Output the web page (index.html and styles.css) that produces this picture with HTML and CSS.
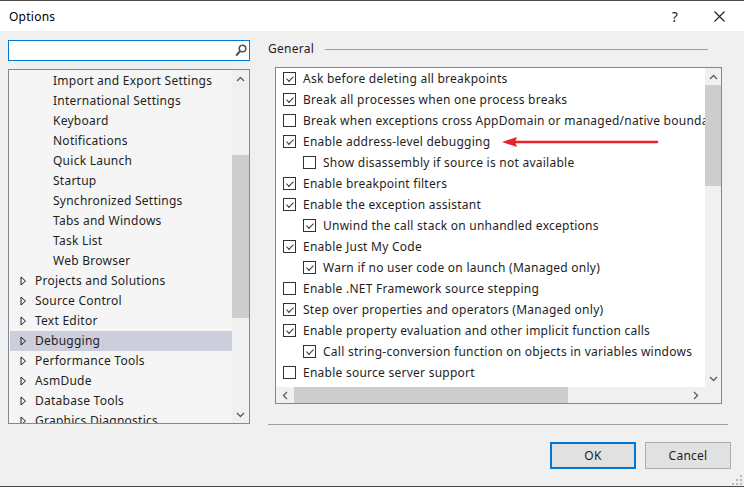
FILE: index.html
```html
<!DOCTYPE html>
<html lang="en">
<head>
    <meta charset="UTF-8">
    <title>Options</title>
    <link rel="stylesheet" href="styles.css">
</head>
<body>
    <div class="window">
        <div class="titlebar">
            <span class="title">Options</span>
            <span class="help">?</span>
            <svg class="close" width="11" height="11" viewBox="0 0 11 11">
                <path d="M0.5 0.5 L10.5 10.5 M10.5 0.5 L0.5 10.5" stroke="#1e1e1e" stroke-width="1.1" fill="none"/>
            </svg>
        </div>

        <div class="main">
            <div class="left-col">
                <div class="search">
                    <svg class="search-icon" width="12" height="13" viewBox="0 0 12 13">
                        <circle cx="7.5" cy="4.5" r="3.3" stroke="#555" stroke-width="1.6" fill="none"/>
                        <path d="M5.3 6.8 L1.2 11.6" stroke="#555" stroke-width="2.2"/>
                    </svg>
                </div>
                <div class="tree">
                    <div class="tree-items">
                        <div class="node sub">Import and Export Settings</div>
                        <div class="node sub">International Settings</div>
                        <div class="node sub">Keyboard</div>
                        <div class="node sub">Notifications</div>
                        <div class="node sub">Quick Launch</div>
                        <div class="node sub">Startup</div>
                        <div class="node sub">Synchronized Settings</div>
                        <div class="node sub">Tabs and Windows</div>
                        <div class="node sub">Task List</div>
                        <div class="node sub">Web Browser</div>
                        <div class="node top"><svg class="tri" width="7" height="10" viewBox="0 0 7 10"><path d="M1 1 L5.5 5 L1 9 Z" stroke="#1e1e1e" fill="none"/></svg>Projects and Solutions</div>
                        <div class="node top"><svg class="tri" width="7" height="10" viewBox="0 0 7 10"><path d="M1 1 L5.5 5 L1 9 Z" stroke="#1e1e1e" fill="none"/></svg>Source Control</div>
                        <div class="node top"><svg class="tri" width="7" height="10" viewBox="0 0 7 10"><path d="M1 1 L5.5 5 L1 9 Z" stroke="#1e1e1e" fill="none"/></svg>Text Editor</div>
                        <div class="node top selected"><svg class="tri" width="7" height="10" viewBox="0 0 7 10"><path d="M1 1 L5.5 5 L1 9 Z" stroke="#1e1e1e" fill="none"/></svg>Debugging</div>
                        <div class="node top"><svg class="tri" width="7" height="10" viewBox="0 0 7 10"><path d="M1 1 L5.5 5 L1 9 Z" stroke="#1e1e1e" fill="none"/></svg>Performance Tools</div>
                        <div class="node top"><svg class="tri" width="7" height="10" viewBox="0 0 7 10"><path d="M1 1 L5.5 5 L1 9 Z" stroke="#1e1e1e" fill="none"/></svg>AsmDude</div>
                        <div class="node top"><svg class="tri" width="7" height="10" viewBox="0 0 7 10"><path d="M1 1 L5.5 5 L1 9 Z" stroke="#1e1e1e" fill="none"/></svg>Database Tools</div>
                        <div class="node top"><svg class="tri" width="7" height="10" viewBox="0 0 7 10"><path d="M1 1 L5.5 5 L1 9 Z" stroke="#1e1e1e" fill="none"/></svg>Graphics Diagnostics</div>
                    </div>
                    <div class="vscroll tree-scroll">
                        <svg class="arrow" width="9" height="6" viewBox="0 0 9 6"><path d="M1 5 L4.5 1.5 L8 5" stroke="#606060" stroke-width="1.4" fill="none"/></svg>
                        <div class="track"><div class="thumb tree-thumb"></div></div>
                        <svg class="arrow" width="9" height="6" viewBox="0 0 9 6"><path d="M1 1 L4.5 4.5 L8 1" stroke="#606060" stroke-width="1.4" fill="none"/></svg>
                    </div>
                </div>
            </div>

            <div class="right-col">
                <div class="group-header">
                    <span>General</span>
                    <div class="group-line"></div>
                </div>
                <div class="panel">
                    <div class="panel-content">
                        <div class="opt"><span class="cb on"></span>Ask before deleting all breakpoints</div>
                        <div class="opt"><span class="cb on"></span>Break all processes when one process breaks</div>
                        <div class="opt"><span class="cb"></span>Break when exceptions cross AppDomain or managed/native boundaries</div>
                        <div class="opt"><span class="cb on"></span>Enable address-level debugging</div>
                        <div class="opt ind"><span class="cb"></span>Show disassembly if source is not available</div>
                        <div class="opt"><span class="cb on"></span>Enable breakpoint filters</div>
                        <div class="opt"><span class="cb on"></span>Enable the exception assistant</div>
                        <div class="opt ind"><span class="cb on"></span>Unwind the call stack on unhandled exceptions</div>
                        <div class="opt"><span class="cb on"></span>Enable Just My Code</div>
                        <div class="opt ind"><span class="cb on"></span>Warn if no user code on launch (Managed only)</div>
                        <div class="opt"><span class="cb"></span>Enable .NET Framework source stepping</div>
                        <div class="opt"><span class="cb on"></span>Step over properties and operators (Managed only)</div>
                        <div class="opt"><span class="cb on"></span>Enable property evaluation and other implicit function calls</div>
                        <div class="opt ind"><span class="cb on"></span>Call string-conversion function on objects in variables windows</div>
                        <div class="opt"><span class="cb"></span>Enable source server support</div>

                        <!-- annotation arrow -->
                        <svg class="red-arrow" width="160" height="12" viewBox="0 0 160 12">
                            <path d="M12 6 L155 6" stroke="#e8212b" stroke-width="2.6" stroke-linecap="round"/>
                            <path d="M0 6 L15 1 L13 6 L15 11 Z" fill="#e8212b"/>
                        </svg>
                    </div>
                    <div class="vscroll">
                        <svg class="arrow" width="9" height="6" viewBox="0 0 9 6"><path d="M1 5 L4.5 1.5 L8 5" stroke="#606060" stroke-width="1.4" fill="none"/></svg>
                        <div class="track"><div class="thumb panel-thumb"></div></div>
                        <svg class="arrow" width="9" height="6" viewBox="0 0 9 6"><path d="M1 1 L4.5 4.5 L8 1" stroke="#606060" stroke-width="1.4" fill="none"/></svg>
                    </div>
                    <div class="hscroll">
                        <svg class="arrow" width="6" height="9" viewBox="0 0 6 9"><path d="M5 1 L1.5 4.5 L5 8" stroke="#606060" stroke-width="1.4" fill="none"/></svg>
                        <div class="htrack"><div class="hthumb"></div></div>
                        <svg class="arrow" width="6" height="9" viewBox="0 0 6 9"><path d="M1 1 L4.5 4.5 L1 8" stroke="#606060" stroke-width="1.4" fill="none"/></svg>
                    </div>
                    <div class="corner"></div>
                </div>
                <div class="separator"></div>
            </div>
        </div>

        <div class="footer">
            <button class="btn default">OK</button>
            <button class="btn">Cancel</button>
        </div>

        <svg class="grip" width="10" height="10" viewBox="0 0 10 10">
            <rect x="8" y="0" width="2" height="2" fill="#b8b8b8"/>
            <rect x="4" y="4" width="2" height="2" fill="#b8b8b8"/>
            <rect x="8" y="4" width="2" height="2" fill="#b8b8b8"/>
            <rect x="0" y="8" width="2" height="2" fill="#b8b8b8"/>
            <rect x="4" y="8" width="2" height="2" fill="#b8b8b8"/>
            <rect x="8" y="8" width="2" height="2" fill="#b8b8b8"/>
        </svg>
    </div>
</body>
</html>
```

FILE: styles.css
```css
body {
    margin: 0;
    font-family: "Noto Sans", "Noto Sans CJK SC", sans-serif;
    font-size: 12px;
    letter-spacing: 0.25px;
    color: #1e1e1e;
    background: #f0f0f0;
}
.window {
    position: relative;
    width: 744px;
    height: 487px;
    box-sizing: border-box;
    border-top: 1px solid #4a4a4a;
    border-bottom: 1px solid #4a4a4a;
    background: #f0f0f0;
    overflow: hidden;
}
.titlebar {
    height: 30px;
    background: #fff;
    display: flex;
    align-items: center;
    padding-left: 9px;
}
.title {
    flex: 1;
    color: #000;
}
.help {
    font-size: 14px;
    color: #1e1e1e;
    margin-right: 36px;
}
.close {
    margin-right: 19px;
}
.main {
    display: flex;
    padding: 9px 0 0 8px;
}
.left-col {
    width: 242px;
    display: flex;
    flex-direction: column;
    gap: 8px;
}
.search {
    height: 21px;
    box-sizing: border-box;
    border: 1px solid #0078d7;
    background: #fff;
    display: flex;
    justify-content: flex-end;
    align-items: center;
    padding-right: 2px;
}
.tree {
    height: 355px;
    box-sizing: border-box;
    border: 1px solid #828790;
    background: #f5f5f5;
    display: flex;
}
.tree-items {
    flex: 1;
    padding: 1px 0 0 1px;
    overflow: hidden;
}
.node {
    height: 20px;
    line-height: 20px;
    white-space: nowrap;
    display: flex;
    align-items: center;
}
.node.sub {
    padding-left: 43px;
}
.node.top {
    padding-left: 10px;
}
.tri {
    margin-right: 8px;
}
.node.selected {
    background: #cccedb;
}
.vscroll {
    width: 16px;
    background: #f0f0f0;
    display: flex;
    flex-direction: column;
    align-items: center;
}
.tree-scroll {
    width: 17px;
}
.vscroll .arrow {
    margin: 6px 0 5px;
}
.track {
    flex: 1;
    width: 100%;
    position: relative;
}
.thumb {
    background: #cdcdcd;
    width: 100%;
}
.tree-thumb {
    margin-top: 68px;
    height: 163px;
}
.panel-thumb {
    margin-top: 0;
    height: 101px;
}
.right-col {
    margin-left: 18px;
    width: 460px;
}
.group-header {
    height: 17px;
    display: flex;
    align-items: center;
}
.group-line {
    flex: 1;
    height: 1px;
    background: #a0a0a0;
    margin: 1px 20px 0 11px;
}
.panel {
    margin: 10px 0 0 7px;
    width: 447px;
    height: 337px;
    box-sizing: border-box;
    border: 1px solid #828790;
    display: grid;
    grid-template-columns: 1fr 16px;
    grid-template-rows: 1fr 16px;
}
.panel-content {
    position: relative;
    background: #fff;
    overflow: hidden;
    padding-left: 7px;
}
.opt {
    height: 21px;
    display: flex;
    align-items: center;
    white-space: nowrap;
}
.opt.ind {
    padding-left: 20px;
}
.cb {
    width: 13px;
    height: 13px;
    box-sizing: border-box;
    border: 1px solid #333;
    background: #fff;
    margin-right: 7px;
    flex-shrink: 0;
    position: relative;
}
.cb.on::after {
    content: "";
    position: absolute;
    left: 2px;
    top: 0px;
    width: 6px;
    height: 3px;
    border-left: 1px solid #333;
    border-bottom: 1px solid #333;
    transform: translate(0.5px, 3px) rotate(-45deg);
}
.red-arrow {
    position: absolute;
    left: 226px;
    top: 68px;
}
.hscroll {
    background: #f0f0f0;
    display: flex;
    align-items: center;
}
.hscroll .arrow {
    margin: 0 6px;
}
.htrack {
    flex: 1;
    height: 100%;
}
.hthumb {
    width: 274px;
    height: 100%;
    background: #cdcdcd;
}
.corner {
    background: #f0f0f0;
}
.separator {
    margin-top: 20px;
    height: 1px;
    background: #a0a0a0;
}
.footer {
    display: flex;
    justify-content: flex-end;
    gap: 9px;
    padding-right: 13px;
    margin-top: 17px;
}
.btn {
    width: 86px;
    height: 27px;
    box-sizing: border-box;
    border: 1px solid #adadad;
    background: #e1e1e1;
    font-family: inherit;
    font-size: 12px;
    letter-spacing: 0.25px;
    color: #1e1e1e;
    padding: 0;
}
.btn.default {
    border: 2px solid #0078d7;
}
.grip {
    position: absolute;
    right: 2px;
    bottom: 1px;
}
```
